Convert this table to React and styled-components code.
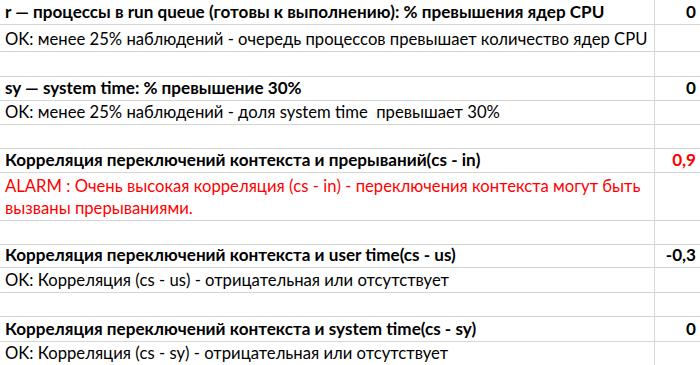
import React from 'react';
import styled, { createGlobalStyle } from 'styled-components';

const GlobalStyle = createGlobalStyle`
  html, body {
    margin: 0;
    padding: 0;
    background: #ffffff;
  }
  body {
    font-family: Lato, "Open Sans", "Liberation Sans", sans-serif;
    -webkit-font-smoothing: antialiased;
  }
`;

const Sheet = styled.div`
  display: grid;
  grid-template-columns: 655px 45px;
  width: 700px;
  height: 365px;
  overflow: hidden;
  background: #ffffff;
`;

const Cell = styled.div`
  height: ${p => p.h}px;
  box-sizing: border-box;
  display: flex;
  flex-direction: column;
  justify-content: flex-end;
  align-items: ${p => (p.num ? 'flex-end' : 'flex-start')};
  padding: 0 ${p => (p.num ? '4px' : '0')} 1px ${p => (p.num ? '0' : '5px')};
  border-bottom: ${p => (p.last ? 'none' : '1px solid #d6d6d6')};
  border-right: ${p => (p.num ? 'none' : '1px solid #d6d6d6')};
  font-size: ${p => (p.bold ? '17.1px' : '16.65px')};
  line-height: 22px;
  font-weight: ${p => (p.bold ? 700 : 400)};
  color: ${p => (p.alarm ? '#ff0000' : '#000000')};
  white-space: pre;
`;

const Line = styled.span`
  display: block;
`;

const rows = [
  { h: 25, text: 'r — процессы в run queue (готовы к выполнению): % превышения ядер CPU', bold: true, value: '0' },
  { h: 27, text: 'OK: менее 25% наблюдений - очередь процессов превышает количество ядер CPU' },
  { h: 25 },
  { h: 24, text: 'sy — system time: % превышение 30%', bold: true, value: '0' },
  { h: 24, text: 'OK: менее 25% наблюдений - доля system time  превышает 30%' },
  { h: 24 },
  { h: 24, text: 'Корреляция переключений контекста и прерываний(cs - in)', bold: true, value: '0,9', alarm: true },
  {
    h: 48,
    lines: ['ALARM : Очень высокая корреляция (cs - in) - переключения контекста могут быть', 'вызваны прерываниями.'],
    alarm: true,
  },
  { h: 24 },
  { h: 23, text: 'Корреляция переключений контекста и user time(cs - us)', bold: true, value: '-0,3' },
  { h: 25, text: 'OK: Корреляция (cs - us) - отрицательная или отсутствует' },
  { h: 24 },
  { h: 25, text: 'Корреляция переключений контекста и system time(cs - sy)', bold: true, value: '0' },
  { h: 23, text: 'OK: Корреляция (cs - sy) - отрицательная или отсутствует', last: true },
];

export default function App() {
  return (
    <>
      <GlobalStyle />
      <Sheet>
        {rows.map((r, i) => (
          <React.Fragment key={i}>
            <Cell h={r.h} bold={r.bold} alarm={r.alarm && !r.bold} last={r.last}>
              {r.lines ? r.lines.map((l, j) => <Line key={j}>{l}</Line>) : r.text}
            </Cell>
            <Cell h={r.h} num bold alarm={r.alarm && r.bold} last={r.last}>
              {r.value}
            </Cell>
          </React.Fragment>
        ))}
      </Sheet>
    </>
  );
}
